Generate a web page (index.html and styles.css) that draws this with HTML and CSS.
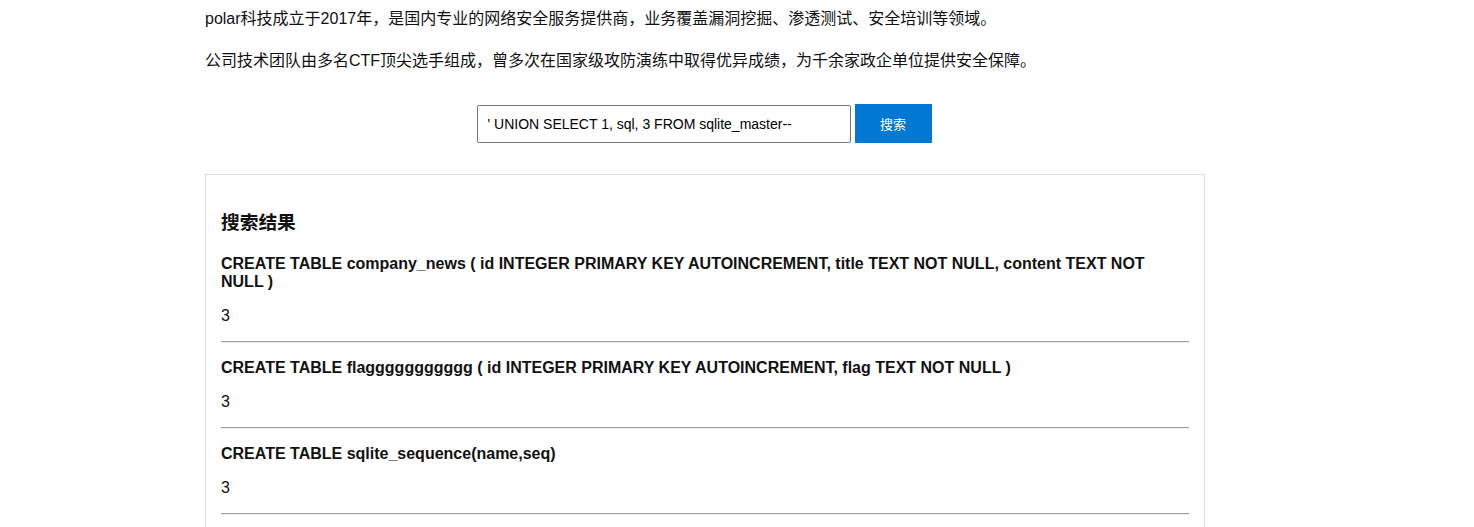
FILE: index.html
```html
<!DOCTYPE html>
<html lang="zh-CN">
<head>
  <meta charset="UTF-8">
  <meta name="viewport" content="width=device-width, initial-scale=1">
  <title>polar科技 - 新闻搜索</title>
  <link rel="stylesheet" href="styles.css">
</head>
<body>
  <div class="container">
    <div class="intro">
      <p>polar科技成立于2017年，是国内专业的网络安全服务提供商，业务覆盖漏洞挖掘、渗透测试、安全培训等领域。</p>
      <p>公司技术团队由多名CTF顶尖选手组成，曾多次在国家级攻防演练中取得优异成绩，为千余家政企单位提供安全保障。</p>
    </div>

    <form class="search-form" onsubmit="return false;">
      <input type="text" class="search-input" name="keyword" value="' UNION SELECT 1, sql, 3 FROM sqlite_master--">
      <button type="submit" class="search-button">搜索</button>
    </form>

    <div class="results">
      <h3>搜索结果</h3>
      <div class="result-item">
        <h4>CREATE TABLE company_news ( id INTEGER PRIMARY KEY AUTOINCREMENT, title TEXT NOT NULL, content TEXT NOT NULL )</h4>
        <p>3</p>
        <hr>
      </div>
      <div class="result-item">
        <h4>CREATE TABLE flaggggggggggg ( id INTEGER PRIMARY KEY AUTOINCREMENT, flag TEXT NOT NULL )</h4>
        <p>3</p>
        <hr>
      </div>
      <div class="result-item">
        <h4>CREATE TABLE sqlite_sequence(name,seq)</h4>
        <p>3</p>
        <hr>
      </div>
    </div>
  </div>
</body>
</html>
```

FILE: styles.css
```css
* {
  box-sizing: border-box;
}

body {
  margin: 0;
  background-color: #fff;
  font-family: "Liberation Sans", Arial, "Noto Sans CJK SC", sans-serif;
  color: #111;
}

.container {
  width: 1000px;
  margin-left: 205px;
  padding-top: 6px;
}

.intro p {
  margin: 0 0 16px;
  font-size: 16px;
  line-height: 1.6;
}

.search-form {
  display: flex;
  justify-content: center;
  align-items: flex-end;
  gap: 4px;
  margin: 31px 0 31px;
  padding-right: 2px;
}

.search-input {
  width: 374px;
  height: 38px;
  padding: 0 10px;
  border: 1px solid #767676;
  border-radius: 2px;
  font-family: "Liberation Sans", Arial, sans-serif;
  font-size: 14px;
  color: #000;
}

.search-button {
  width: 77px;
  height: 39px;
  border: none;
  background-color: #0078d4;
  color: white;
  font-family: "Liberation Sans", Arial, "Noto Sans CJK SC", sans-serif;
  font-size: 13px;
  cursor: pointer;
}

.results {
  border: 1px solid #ddd;
  padding: 15px;
  min-height: 600px;
}

.results h3 {
  font-size: 18.72px;
  line-height: 27px;
  margin: 19px 0 19px;
}

.result-item h4 {
  font-size: 16px;
  line-height: 18px;
  margin: 16px 0;
}

.result-item p {
  font-size: 16px;
  line-height: 18px;
  margin: 16px 0;
}

.result-item hr {
  margin: 8px 0;
  border: none;
  border-top: 1px solid #a0a0a0;
  border-bottom: 1px solid #eee;
}
```
